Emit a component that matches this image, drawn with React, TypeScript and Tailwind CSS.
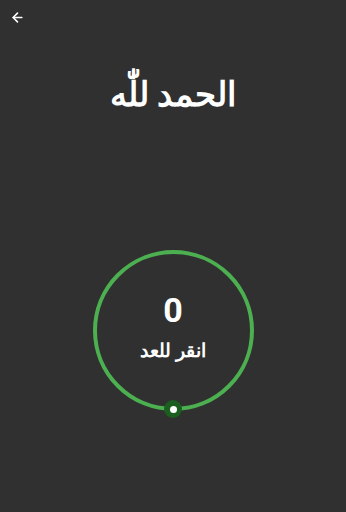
import React, { useState } from 'react';
import { ArrowLeft } from 'lucide-react';

const App: React.FC = () => {
    const [count, setCount] = useState(0);

    return (
        <div className="w-[346px] h-[512px] bg-[#303030] flex flex-col text-white" style={{ fontFamily: 'Roboto, "Noto Sans", sans-serif' }}>
            <div className="h-[34px] flex items-center pl-[10px]">
                <ArrowLeft className="w-[15px] h-[15px] text-white" strokeWidth={2.5} />
            </div>

            <h1 dir="rtl" className="mt-[36px] text-center text-[34px] font-bold leading-[48px]">الحمد للّٰه</h1>

            <div className="flex justify-center mt-[132px]">
                <button
                    onClick={() => setCount(c => c + 1)}
                    className="relative w-[161px] h-[161px] rounded-full border-[4px] border-[#4caf50] flex flex-col items-center justify-center"
                >
                    <span className="text-[34px] font-bold leading-[40px] -mt-[8px]">{count}</span>
                    <span dir="rtl" className="text-[19px] font-bold leading-[26px] mt-[8px]">انقر للعد</span>
                    <span className="absolute -bottom-[11px] left-1/2 -translate-x-1/2 w-[18px] h-[18px] rounded-full bg-[#1b5e20] flex items-center justify-center">
                        <span className="w-[7px] h-[7px] rounded-full bg-white" />
                    </span>
                </button>
            </div>
        </div>
    );
};

export default App;
